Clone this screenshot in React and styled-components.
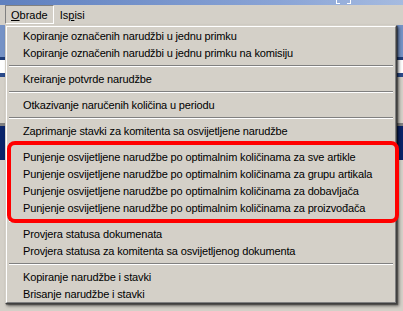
import React from "react";
import styled, { createGlobalStyle } from "styled-components";

const GlobalStyle = createGlobalStyle`
  html, body {
    margin: 0;
    padding: 0;
    background: #d4d0c8;
    overflow: hidden;
  }
  body {
    font-family: "Liberation Sans", Arial, sans-serif;
    font-size: 11px;
    color: #000;
  }
`;

const Screen = styled.div`
  position: relative;
  width: 403px;
  height: 311px;
  overflow: hidden;
  background: #d4d0c8;
`;

const TitleBar = styled.div`
  height: 5px;
  background: linear-gradient(to right, #5f80bf, #8aa4d6 70%, #a6bbe0);
  display: flex;
  align-items: flex-end;
  justify-content: flex-end;
  gap: 7px;
  padding-right: 52px;
  overflow: hidden;
`;

const Bracket = styled.span`
  width: 3px;
  height: 3px;
  margin-bottom: 1px;
  border-bottom: 1px solid #fff;
  ${({ $side }) =>
    $side === "left" ? "border-left: 1px solid #fff;" : "border-right: 1px solid #fff;"}
`;

const MenuBar = styled.div`
  height: 20px;
  display: flex;
  align-items: stretch;
  padding-left: 5px;
  background: #d4d0c8;
`;

const MenuTitle = styled.div`
  display: flex;
  align-items: center;
  padding: 0 5px;
  box-sizing: border-box;
  height: 19px;
  border: 1px solid transparent;
  ${({ $open }) =>
    $open &&
    `
    border-color: #808080 #ffffff #ffffff #808080;
  `}
`;

const Key = styled.span`
  text-decoration: underline;
`;

const Backdrop = styled.div`
  display: flex;
  flex-direction: column;
`;

const Band = styled.div`
  height: ${({ $h }) => $h}px;
  background: ${({ $c }) => $c};
`;

const Dropdown = styled.div`
  position: absolute;
  left: 5px;
  top: 25px;
  width: 392px;
  box-sizing: border-box;
  background: #d4d0c8;
  border: 1px solid;
  border-color: #d4d0c8 #404040 #404040 #d4d0c8;
  box-shadow: 2px 2px 3px rgba(0, 0, 0, 0.5), 1px 1px 1px rgba(0, 0, 0, 0.35);
`;

const Inner = styled.div`
  border: 1px solid;
  border-color: #ffffff #808080 #808080 #ffffff;
  display: flex;
  flex-direction: column;
`;

const Item = styled.div`
  height: 17px;
  display: flex;
  align-items: center;
  padding-left: 16px;
  white-space: nowrap;
  letter-spacing: -0.15px;
  color: #000;
`;

const Separator = styled.div`
  height: 9px;
  display: flex;
  flex-direction: column;
  justify-content: center;
  padding: 0 2px;

  &::before {
    content: "";
    display: block;
    height: 1px;
    background: #808080;
  }
  &::after {
    content: "";
    display: block;
    height: 1px;
    background: #ffffff;
  }
`;

const Highlight = styled.div`
  position: absolute;
  left: 7px;
  top: 141px;
  width: 392px;
  height: 82px;
  box-sizing: border-box;
  border: 4px solid #ff0000;
  border-radius: 8px;
  pointer-events: none;
`;

const groups = [
  [
    "Kopiranje označenih narudžbi u jednu primku",
    "Kopiranje označenih narudžbi u jednu primku na komisiju",
  ],
  ["Kreiranje potvrde narudžbe"],
  ["Otkazivanje naručenih količina u periodu"],
  ["Zaprimanje stavki za komitenta sa osvijetljene narudžbe"],
  [
    "Punjenje osvijetljene narudžbe po optimalnim količinama za sve artikle",
    "Punjenje osvijetljene narudžbe po optimalnim količinama za grupu artikala",
    "Punjenje osvijetljene narudžbe po optimalnim količinama za dobavljača",
    "Punjenje osvijetljene narudžbe po optimalnim količinama za proizvođača",
  ],
  [
    "Provjera statusa dokumenata",
    "Provjera statusa za komitenta sa osvijetljenog dokumenta",
  ],
  ["Kopiranje narudžbe i stavki", "Brisanje narudžbe i stavki"],
];

const bands = [
  [32, "#7592c6"],
  [3, "#1e3c78"],
  [13, "#ffffff"],
  [4, "#2a4a8a"],
  [46, "#d4d0c8"],
  [3, "#808080"],
  [34, "#0a246a"],
  [151, "#d4d0c8"],
];

const App = () => {
  return (
    <Screen>
      <GlobalStyle />
      <TitleBar>
        <Bracket $side="left" />
        <Bracket $side="right" />
      </TitleBar>
      <MenuBar>
        <MenuTitle $open>
          <span>
            <Key>O</Key>brade
          </span>
        </MenuTitle>
        <MenuTitle>
          <span>
            Is<Key>p</Key>isi
          </span>
        </MenuTitle>
      </MenuBar>
      <Backdrop>
        {bands.map(([h, c], i) => (
          <Band key={i} $h={h} $c={c} />
        ))}
      </Backdrop>
      <Dropdown>
        <Inner>
          {groups.map((g, gi) => (
            <React.Fragment key={gi}>
              {gi > 0 && <Separator />}
              {g.map((label) => (
                <Item key={label}>{label}</Item>
              ))}
            </React.Fragment>
          ))}
        </Inner>
      </Dropdown>
      <Highlight />
    </Screen>
  );
};

export default App;
